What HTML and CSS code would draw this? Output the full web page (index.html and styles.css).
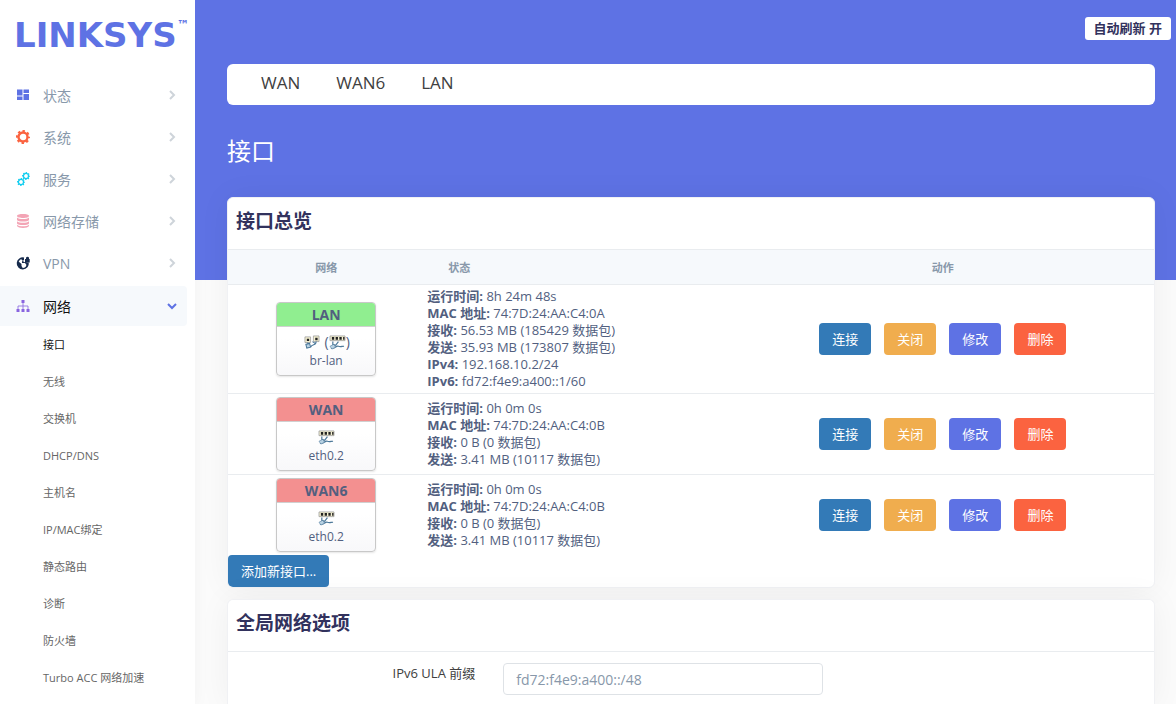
FILE: index.html
```html
<!DOCTYPE html>
<html lang="zh-CN">
<head>
    <meta charset="UTF-8">
    <meta name="viewport" content="width=device-width, initial-scale=1.0">
    <title>LINKSYS - 接口</title>
    <link rel="stylesheet" href="styles.css">
</head>
<body>

    <!-- Shared icons -->
    <svg class="sprite" aria-hidden="true">
        <symbol id="chevron" viewBox="0 0 10 10">
            <path d="M3 1l4 4-4 4" fill="none" stroke="currentColor" stroke-width="2"/>
        </symbol>
        <symbol id="gear" viewBox="0 0 14 14">
            <circle cx="7" cy="7" r="4.5" fill="none" stroke="currentColor" stroke-width="2.4"/>
            <circle cx="7" cy="7" r="6" fill="none" stroke="currentColor" stroke-width="2" stroke-dasharray="2.4 2.312" stroke-dashoffset="1.2"/>
        </symbol>
        <symbol id="switch" viewBox="0 0 18 16">
            <path d="M1 1h16v5H1z" fill="#f4f0d0" stroke="#999" stroke-width=".8"/>
            <path d="M3 2h2.500v3H3zM7 2h2.500v3H7zM11 2h2.500v3H11zM15 2h1.500v3H15z" fill="#222"/>
            <path d="M4 7v3l3 1 3-4M2 14c5 1 5-3 8-2 2 1 4 0 6 0" fill="none" stroke="#4c7899" stroke-width="1.3"/>
            <path d="M1 12l4-2 2 3-4 2z" fill="#b9d3e4" stroke="#4c7899" stroke-width=".6"/>
        </symbol>
        <symbol id="bridge" viewBox="0 0 18 16">
            <path d="M2 2h6v6H2zM11 1h6v6h-6z" fill="#f4f0d0" stroke="#999" stroke-width=".8"/>
            <path d="M4 4h2.500v2.500H4zM13 3h2.500v2.500H13z" fill="#222"/>
            <path d="M3 10l4-1 1 4-4 1zM14 7c0 5-4 2-6 6M5 8v2M10 7l3 2" fill="#b9d3e4" stroke="#4c7899" stroke-width="1.1"/>
        </symbol>
    </svg>

    <aside class="sidebar">
        <a class="brand" href="#">LINKSYS<sup>™</sup></a>
        <nav>
            <ul class="menu">
                <li>
                    <a class="menu-link" href="#">
                        <svg class="icon icon-status" viewBox="0 0 14 14"><path d="M1 1.500h5.500v6H1zM7.500 1.500H13v3.500H7.500zM1 8.500h5.500V12H1zM7.500 6H13v6H7.500z" fill="currentColor"/></svg>
                        <span>状态</span>
                        <svg class="arrow"><use href="#chevron"/></svg>
                    </a>
                </li>
                <li>
                    <a class="menu-link" href="#">
                        <svg class="icon icon-system"><use href="#gear"/></svg>
                        <span>系统</span>
                        <svg class="arrow"><use href="#chevron"/></svg>
                    </a>
                </li>
                <li>
                    <a class="menu-link" href="#">
                        <svg class="icon icon-services" viewBox="0 0 14 14"><use href="#gear" x="1" y="6" width="8" height="8"/><use href="#gear" x="6" y="0" width="8" height="8"/></svg>
                        <span>服务</span>
                        <svg class="arrow"><use href="#chevron"/></svg>
                    </a>
                </li>
                <li>
                    <a class="menu-link" href="#">
                        <svg class="icon icon-nas" viewBox="0 0 14 14"><path d="M1 2c0-2.600 12-2.600 12 0s-12 2.600-12 0zM1 3.500c2 2 10 2 12 0V6c-1 2-11 2-12 0zM1 7.200c2 2 10 2 12 0v2.300c-1 2-11 2-12 0zM1 10.700c2 2 10 2 12 0V12c-1 2.600-11 2.600-12 0z" fill="currentColor"/></svg>
                        <span>网络存储</span>
                        <svg class="arrow"><use href="#chevron"/></svg>
                    </a>
                </li>
                <li>
                    <a class="menu-link" href="#">
                        <svg class="icon icon-vpn" viewBox="0 0 14 14"><path d="M8 2.200A5.300 5.300 0 1 0 12 6.500" fill="none" stroke="currentColor" stroke-width="1.500"/><path d="M2 5l3.500 3v2L7 12.500 4 12 1.500 9zM4 2l4 0v2L6 5.500v1.500h3l1.500 2-1 3 2.500-2V7L8 6zM9 3h1V1.800a1.600 1.600 0 0 1 3 0V3h.7v3.500H9z" fill="currentColor"/></svg>
                        <span>VPN</span>
                        <svg class="arrow"><use href="#chevron"/></svg>
                    </a>
                </li>
                <li>
                    <a class="menu-link active" href="#">
                        <svg class="icon icon-network" viewBox="0 0 14 14"><path d="M5.500 1h3v3h-3zM.500 10h3v3h-3zM5.500 10h3v3h-3zM10.500 10h3v3h-3z" fill="currentColor"/><path d="M7 4v6M2 10V7h10v3" fill="none" stroke="currentColor" stroke-width=".8"/></svg>
                        <span>网络</span>
                        <svg class="arrow"><use href="#chevron"/></svg>
                    </a>
                    <ul class="submenu">
                        <li><a class="current" href="#">接口</a></li>
                        <li><a href="#">无线</a></li>
                        <li><a href="#">交换机</a></li>
                        <li><a href="#">DHCP/DNS</a></li>
                        <li><a href="#">主机名</a></li>
                        <li><a href="#">IP/MAC绑定</a></li>
                        <li><a href="#">静态路由</a></li>
                        <li><a href="#">诊断</a></li>
                        <li><a href="#">防火墙</a></li>
                        <li><a href="#">Turbo ACC 网络加速</a></li>
                    </ul>
                </li>
            </ul>
        </nav>
    </aside>

    <main class="main">
        <header class="topbar">
            <button class="refresh" type="button">自动刷新 开</button>
        </header>

        <div class="content">
            <nav class="tabs">
                <a href="#">WAN</a>
                <a href="#">WAN6</a>
                <a href="#">LAN</a>
            </nav>

            <h1>接口</h1>

            <section class="card">
                <h2>接口总览</h2>
                <table class="interfaces">
                    <thead>
                        <tr>
                            <th class="col-network">网络</th>
                            <th class="col-status">状态</th>
                            <th class="col-actions">动作</th>
                        </tr>
                    </thead>
                    <tbody>
                        <tr>
                            <td>
                                <div class="ifacebox">
                                    <div class="ifacebox-head up">LAN</div>
                                    <div class="ifacebox-body">
                                        <div class="devices"><svg><use href="#bridge"/></svg><span class="ports">(<svg><use href="#switch"/></svg>)</span></div>
                                        <div>br-lan</div>
                                    </div>
                                </div>
                            </td>
                            <td class="status">
                                <strong>运行时间:</strong> 8h 24m 48s<br>
                                <strong>MAC 地址:</strong> 74:7D:24:AA:C4:0A<br>
                                <strong>接收:</strong> 56.53 MB (185429 数据包)<br>
                                <strong>发送:</strong> 35.93 MB (173807 数据包)<br>
                                <strong>IPv4:</strong> 192.168.10.2/24<br>
                                <strong>IPv6:</strong> fd72:f4e9:a400::1/60
                            </td>
                            <td>
                                <div class="actions">
                                    <button class="btn btn-connect" type="button">连接</button>
                                    <button class="btn btn-stop" type="button">关闭</button>
                                    <button class="btn btn-edit" type="button">修改</button>
                                    <button class="btn btn-delete" type="button">删除</button>
                                </div>
                            </td>
                        </tr>
                        <tr>
                            <td>
                                <div class="ifacebox">
                                    <div class="ifacebox-head down">WAN</div>
                                    <div class="ifacebox-body">
                                        <div class="devices"><svg><use href="#switch"/></svg></div>
                                        <div>eth0.2</div>
                                    </div>
                                </div>
                            </td>
                            <td class="status">
                                <strong>运行时间:</strong> 0h 0m 0s<br>
                                <strong>MAC 地址:</strong> 74:7D:24:AA:C4:0B<br>
                                <strong>接收:</strong> 0 B (0 数据包)<br>
                                <strong>发送:</strong> 3.41 MB (10117 数据包)
                            </td>
                            <td>
                                <div class="actions">
                                    <button class="btn btn-connect" type="button">连接</button>
                                    <button class="btn btn-stop" type="button">关闭</button>
                                    <button class="btn btn-edit" type="button">修改</button>
                                    <button class="btn btn-delete" type="button">删除</button>
                                </div>
                            </td>
                        </tr>
                        <tr>
                            <td>
                                <div class="ifacebox">
                                    <div class="ifacebox-head down">WAN6</div>
                                    <div class="ifacebox-body">
                                        <div class="devices"><svg><use href="#switch"/></svg></div>
                                        <div>eth0.2</div>
                                    </div>
                                </div>
                            </td>
                            <td class="status">
                                <strong>运行时间:</strong> 0h 0m 0s<br>
                                <strong>MAC 地址:</strong> 74:7D:24:AA:C4:0B<br>
                                <strong>接收:</strong> 0 B (0 数据包)<br>
                                <strong>发送:</strong> 3.41 MB (10117 数据包)
                            </td>
                            <td>
                                <div class="actions">
                                    <button class="btn btn-connect" type="button">连接</button>
                                    <button class="btn btn-stop" type="button">关闭</button>
                                    <button class="btn btn-edit" type="button">修改</button>
                                    <button class="btn btn-delete" type="button">删除</button>
                                </div>
                            </td>
                        </tr>
                    </tbody>
                </table>
                <button class="btn btn-connect" type="button">添加新接口...</button>
            </section>

            <section class="card card-options">
                <h2>全局网络选项</h2>
                <div class="form-row">
                    <label for="ula">IPv6 ULA 前缀</label>
                    <input id="ula" type="text" value="fd72:f4e9:a400::/48">
                </div>
            </section>
        </div>
    </main>

</body>
</html>
```
FILE: styles.css
```css
* {
    box-sizing: border-box;
}

body {
    margin: 0;
    min-height: 100vh;
    display: flex;
    background-color: #fbfbfb;
    color: #525f7f;
    font-family: "Open Sans", "Noto Sans CJK SC", sans-serif;
    font-size: 13px;
}

a {
    text-decoration: none;
}

ul {
    margin: 0;
    padding: 0;
    list-style: none;
}

button, input {
    font-family: inherit;
}

.sprite {
    display: none;
}

/* Sidebar */
.sidebar {
    flex: 0 0 195px;
    background-color: #fff;
    box-shadow: 0 0 16px rgba(0, 0, 0, 0.04);
}

.brand {
    display: flex;
    align-items: center;
    height: 75px;
    padding: 0 0 5px 14px;
    color: #5e72e4;
    font-family: "DejaVu Sans", sans-serif;
    font-size: 34px;
    font-weight: bold;
}

.brand sup {
    align-self: flex-start;
    padding-top: 18px;
    font-size: 12px;
}

.menu-link {
    display: flex;
    align-items: center;
    gap: 13px;
    height: 40px;
    margin-right: 8px;
    margin-bottom: 2px;
    padding: 0 10px 0 16px;
    border-radius: 0 4px 4px 0;
    color: #8898aa;
    font-size: 14px;
}

.menu-link span {
    flex: 1;
}

.menu-link.active {
    margin-top: 3px;
    margin-bottom: 0;
    background-color: #f6f9fc;
    color: #111;
}

.icon {
    width: 14px;
    height: 14px;
}

.icon-status { color: #5e72e4; }
.icon-system { color: #fb6340; }
.icon-services { color: #11cdef; }
.icon-nas { color: #f3a4b5; }
.icon-vpn { color: #172b4d; }
.icon-network { color: #8965e0; }

.arrow {
    width: 10px;
    height: 10px;
    color: #ced4da;
}

.active .arrow {
    color: #5e72e4;
    transform: rotate(90deg);
}

.submenu a {
    display: block;
    padding-left: 43px;
    color: #666;
    font-size: 11px;
    line-height: 37px;
}

.submenu .current {
    color: #111;
}

/* Main area */
.main {
    flex: 1;
    display: flex;
    flex-direction: column;
    background: linear-gradient(#5e72e4, #5e72e4) top / 100% 280px no-repeat;
}

.topbar {
    display: flex;
    justify-content: flex-end;
    height: 64px;
    padding: 17px 5px 0;
}

.refresh {
    height: 23px;
    padding: 0 9px 2px;
    border: none;
    border-radius: 3px;
    background-color: #fff;
    color: #32325d;
    font-size: 13px;
    font-weight: bold;
    cursor: pointer;
}

.content {
    flex: 1;
    display: flex;
    flex-direction: column;
    padding: 0 21px 0 32px;
}

.tabs {
    display: flex;
    gap: 36px;
    padding: 0 34px;
    border-radius: 6px;
    background-color: #fff;
}

.tabs a {
    padding-bottom: 3px;
    color: #404040;
    font-size: 17px;
    line-height: 38px;
}

h1 {
    margin: 30px 0;
    color: #fff;
    font-size: 24px;
    font-weight: normal;
    line-height: 32px;
}

.card {
    margin-bottom: 11px;
    overflow: hidden;
    border: 1px solid #f0f1f4;
    border-radius: 6px;
    background-color: #fff;
    box-shadow: 0 0 32px rgba(0, 0, 0, 0.05);
}

.card h2 {
    margin: 0;
    padding: 0 8px 4px;
    color: #32325d;
    font-size: 19px;
    line-height: 47px;
}

.card-options {
    flex: 1;
    margin-bottom: 0;
    border-bottom: none;
    border-radius: 6px 6px 0 0;
}

/* Interface table */
.interfaces {
    width: 100%;
    border-collapse: collapse;
    table-layout: fixed;
}

.interfaces th {
    height: 35px;
    padding: 0 24px;
    border-top: 1px solid #e9ecef;
    background-color: #f6f9fc;
    color: #8898aa;
    font-size: 11px;
    text-align: center;
}

.interfaces .col-network {
    width: 21.2%;
}

.interfaces .col-status {
    width: 33.2%;
    text-align: left;
}

.interfaces td {
    padding: 3px;
    border-top: 1px solid #e9ecef;
}

.status {
    line-height: 17px;
}

.ifacebox {
    width: 100px;
    margin: 0 auto;
    overflow: hidden;
    border: 1px solid #c8c8c8;
    border-radius: 4px;
    background: linear-gradient(#fff 50%, #f8f8fa);
    box-shadow: 0 1px 2px rgba(0, 0, 0, 0.1);
    text-align: center;
}

.ifacebox-head {
    border-bottom: 1px solid #d0d0d0;
    font-size: 14px;
    font-weight: bold;
    line-height: 23px;
}

.up {
    background-color: #90ee90;
}

.down {
    background-color: #f39090;
}

.ifacebox-body {
    padding: 6px 0 4px;
    font-size: 12px;
    line-height: 20px;
}

.devices {
    display: flex;
    justify-content: center;
    align-items: center;
    gap: 5px;
    height: 18px;
}

.devices svg {
    width: 17px;
    height: 15px;
}

.ports {
    display: flex;
    align-items: center;
    font-size: 14px;
}

.actions {
    display: flex;
    justify-content: center;
    gap: 13px;
}

.btn {
    display: block;
    height: 32px;
    padding: 0 12px 2px;
    border: 1px solid transparent;
    border-radius: 4px;
    color: #fff;
    font-size: 13px;
    cursor: pointer;
}

.btn-connect { background-color: #337ab7; }
.btn-stop { background-color: #f0ad4e; }
.btn-edit { background-color: #5e72e4; }
.btn-delete { background-color: #fb6340; }

/* Global options */
.form-row {
    display: grid;
    grid-template-columns: 26.7% 320px;
    gap: 28px;
    padding: 11px 0;
    border-top: 1px solid #e9ecef;
}

.form-row label {
    color: #404040;
    line-height: 20px;
    text-align: right;
}

.form-row input {
    height: 32px;
    padding: 0 12px;
    border: 1px solid #dee2e6;
    border-radius: 4px;
    background-color: #fff;
    color: #8898aa;
    font-size: 14px;
}
```
